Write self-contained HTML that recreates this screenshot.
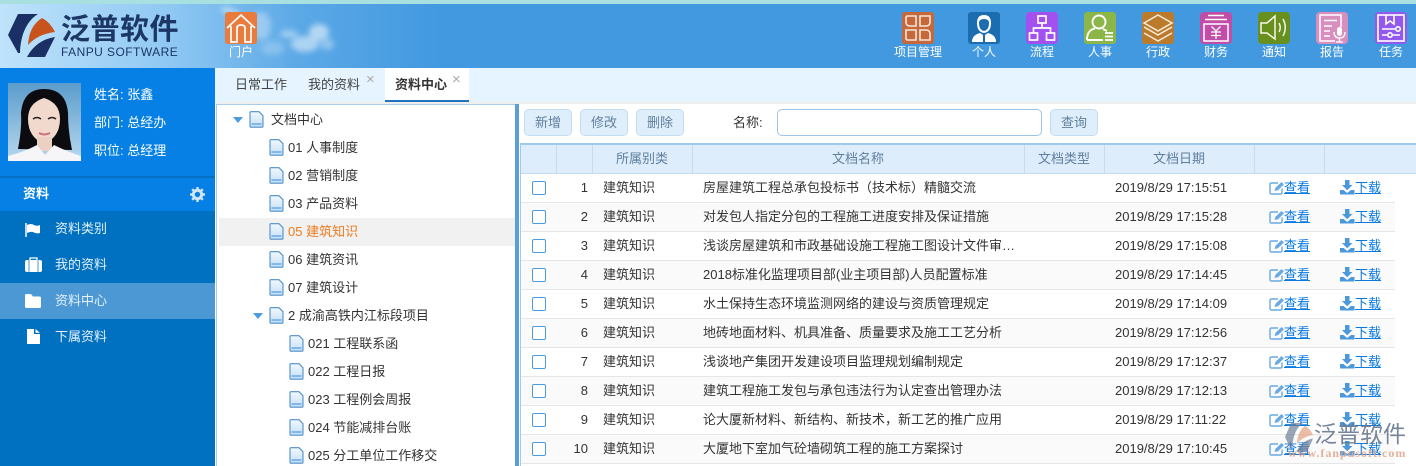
<!DOCTYPE html>
<html lang="zh"><head><meta charset="utf-8"><title>泛普软件</title>
<style>
*{box-sizing:border-box}
html,body{margin:0;padding:0;width:1416px;height:466px;overflow:hidden;background:#fff}
body{position:relative;font:13px "Liberation Sans","Noto Sans CJK SC",sans-serif;color:#333}
.a{position:absolute;white-space:nowrap}
#top{left:0;top:0;width:1416px;height:4px;background:#a8dfe0}
#hd{left:0;top:4px;width:1416px;height:64px;background:linear-gradient(90deg,#bfe3fb 0,#8fc8f3 170px,#5ba8e6 300px,#4299e0 440px,#4299e0 100%);overflow:hidden}
.ic{position:absolute;top:12px;width:32px;height:32px}
.lb{position:absolute;top:44px;width:80px;text-align:center;color:#fff;font-size:12px;line-height:16px}
#sb{left:0;top:68px;width:215px;height:398px;background:#0070c0}
.mi{position:absolute;left:0;width:215px;height:36px;line-height:35px;color:#e4f1fb;padding-left:55px}
.mi svg{position:absolute;left:24px;top:9px}
.ut{position:absolute;left:94px;color:#fff;line-height:18px}
.tab{position:absolute;top:69px;height:34px;line-height:32px;color:#444}
.x{position:absolute;color:#aaa;font-size:15px;line-height:14px}
.t{position:absolute;line-height:20px;color:#333;white-space:nowrap}
.d{position:absolute;width:15px;height:17px}
.ar{position:absolute;width:0;height:0;border-left:5px solid transparent;border-right:5px solid transparent;border-top:6px solid #4a9be0}
.btn{position:absolute;top:109px;height:27px;width:48px;background:#dfeefb;border:1px solid #c4dcf0;border-radius:5px;color:#607f9d;text-align:center;line-height:25px}
#th{left:520px;top:143px;width:896px;height:31px;background:#deedfb;border-top:2px solid #9ccbee;border-bottom:1px solid #c5dcf0}
#th i{position:absolute;top:0;width:1px;height:28px;background:#c5dcf0}
#th span{position:absolute;top:1px;line-height:26px;color:#5f7f9f;text-align:center}
.r{position:absolute;left:520px;width:875px;height:29px;border-bottom:1px solid #e6e6e6;background:#fff}
.r.e{background:#fbfafa}
.r span,.r a,.r b,.r svg{position:absolute}
.r span,.r a{top:0;line-height:27px;white-space:nowrap}
.r b{left:12px;top:7px;width:14px;height:14px;border:1px solid #4a9be0;border-radius:2px;background:#fff}
.r .n{left:40px;width:28px;text-align:right}
.r .k{left:83px}.r .m{left:183px}.r .dt{left:595px}
.r a{color:#0a7ae0;text-decoration:underline}
.r .v{left:764px}.r .l{left:835px}
.r .s1{left:749px;top:7px}.r .s2{left:820px;top:6px}
</style></head><body>
<svg width="0" height="0" style="position:absolute"><defs>
<linearGradient id="dg" x1="0" y1="0" x2="0" y2="1"><stop offset="0" stop-color="#f2f8fe"/><stop offset="1" stop-color="#c4e0f8"/></linearGradient>
<symbol id="doc" viewBox="0 0 15 17"><path d="M1 1.500Q1 .7 2 .7H10L14 4.700V15.200Q14 16.200 13 16.200H2Q1 16.200 1 15.200Z" fill="url(#dg)" stroke="#4f8fcb" stroke-width="1.100"/><path d="M2.500 13H12.500" stroke="#6eaee6" stroke-width="1.600"/></symbol>
<symbol id="ed" viewBox="0 0 16 14"><path d="M13 7.500V11.500Q13 13 11.500 13H2.500Q1 13 1 11.500V3.500Q1 2 2.500 2H9" fill="none" stroke="#69a9e4" stroke-width="1.400"/><path d="M5.500 10L6.500 6.800L12.500 1L15 3.400L9 9.200Z" fill="#69a9e4"/></symbol>
<symbol id="dl" viewBox="0 0 15 15"><path d="M5 0H9.500V5H12.500L7.200 10.200L2 5H5Z" fill="#4b98dc"/><path d="M0 10H3.500L7.200 13L11 10H14.500V14.500H0Z" fill="#4b98dc"/></symbol>
</defs></svg>

<div id="top" class="a"></div>
<div id="hd" class="a">
 <svg class="a" style="left:205px;top:-4px" width="170" height="68"><defs><filter id="bl" x="-30%" y="-30%" width="160%" height="160%"><feGaussianBlur stdDeviation="3"/></filter></defs><g fill="#fff" filter="url(#bl)"><ellipse cx="26" cy="12" rx="11" ry="4" opacity=".4" transform="rotate(25 26 12)"/><ellipse cx="56" cy="26" rx="10" ry="14" opacity=".32"/><ellipse cx="68" cy="48" rx="12" ry="7" opacity=".22"/><ellipse cx="84" cy="34" rx="9" ry="4" opacity=".4"/><ellipse cx="100" cy="44" rx="14" ry="8" opacity=".5"/><ellipse cx="114" cy="32" rx="10" ry="8" opacity=".55"/><ellipse cx="122" cy="44" rx="7" ry="6" opacity=".35"/></g></svg>
 <svg class="a" style="left:8px;top:10px" width="47" height="43" viewBox="0 0 47 43"><path d="M10 0H30Q20 6 15 20Q12 30 12 39H10L0 21Z" fill="#1a2f63"/><path d="M20 31Q21 12 34 4Q42 8 47 18Q30 20 20 31Z" fill="#c9531d"/><path d="M47 23Q28 26 19 43H37Z" fill="#1a2f63"/></svg>
 <div class="a" style="left:61px;top:9px;font-size:29px;font-weight:bold;line-height:34px;color:#1c3766;letter-spacing:.5px">泛普软件</div>
 <div class="a" style="left:61px;top:41px;font-size:12px;line-height:14px;color:#1c3766;letter-spacing:.45px">FANPU SOFTWARE</div>
</div>

<svg class="ic" style="left:225px" viewBox="0 0 32 32"><rect width="32" height="32" rx="3" fill="#e97b3c"/><path d="M2 16L16 3L30 16M6 14V30H12V16Q12 13 16 13Q20 13 20 16V30H26V14" fill="none" stroke="#fff" stroke-width="1.700"/></svg>
<div class="lb" style="left:201px">门户</div>

<svg class="ic" style="left:902px" viewBox="0 0 32 32"><rect width="32" height="32" rx="3" fill="#c6683a"/><g fill="none" stroke="#f3e6dc" stroke-width="1.600"><path d="M5 4H14V14H8Q4 14 4 10V5Z"/><path d="M18 4H28V10Q28 14 24 14H18Z"/><path d="M4 18H14V28H5L4 27Z"/><path d="M18 18H24Q28 18 28 22V28H18Z"/></g></svg>
<div class="lb" style="left:878px">项目管理</div>

<svg class="ic" style="left:968px" viewBox="0 0 32 32"><rect width="32" height="32" rx="3" fill="#1c6db0"/><path d="M9 11Q9 3 16 3Q23 3 23 11Q23 20 16 21Q9 20 9 11Z" fill="#fff"/><path d="M11 11Q11 7 16 7Q21 7 21 11Q21 18 16 19Q11 18 11 11Z" fill="#1c6db0"/><path d="M4 30Q4 23 12 21L15 23V30ZM28 30Q28 23 20 21L17 23V30Z" fill="#fff"/></svg>
<div class="lb" style="left:944px">个人</div>

<svg class="ic" style="left:1026px" viewBox="0 0 32 32"><rect width="32" height="32" rx="4" fill="#a250f0"/><g fill="none" stroke="#fff" stroke-width="1.700"><rect x="12" y="4" width="8" height="7"/><rect x="3.500" y="21" width="8" height="7"/><rect x="20.500" y="21" width="8" height="7"/><path d="M16 11V16M7.500 21V16H24.500V21"/></g></svg>
<div class="lb" style="left:1002px">流程</div>

<svg class="ic" style="left:1084px" viewBox="0 0 32 32"><rect width="32" height="32" rx="3" fill="#8cb648"/><g fill="none" stroke="#fff" stroke-width="1.900"><circle cx="15" cy="10" r="6.500"/><path d="M3 28Q3 18 11 16.500M19 17Q21 18 23 19M3 28H19"/></g><path d="M21 21H29M21 24.500H29M21 28H29" stroke="#fff" stroke-width="1.800"/></svg>
<div class="lb" style="left:1060px">人事</div>

<svg class="ic" style="left:1142px" viewBox="0 0 32 32"><rect width="32" height="32" rx="3" fill="#bb7a2c"/><g fill="none" stroke="#fbeedd" stroke-width="1.500"><path d="M16 3L30 11L16 19L2 11Z"/><path d="M2 15L16 23L30 15"/><path d="M2 21L16 29L30 21"/></g></svg>
<div class="lb" style="left:1118px">行政</div>

<svg class="ic" style="left:1200px" viewBox="0 0 32 32"><rect width="32" height="32" rx="4" fill="#c14da9"/><g fill="none" stroke="#fff" stroke-width="1.500"><path d="M8 3.500H24M5 7.500H27M4 12H28V29H4Z"/><path d="M11.500 14.500L16 19L20.500 14.500M11 20H21M11 23.500H21M16 19V27" stroke-width="1.300"/></g></svg>
<div class="lb" style="left:1176px">财务</div>

<svg class="ic" style="left:1258px" viewBox="0 0 32 32"><rect width="32" height="32" rx="4" fill="#68901f"/><g fill="none" stroke="#f4f7e8" stroke-width="1.500"><path d="M3 11H9L17 4V27L9 21H3Z"/><path d="M21 11Q23.500 15.500 21 20"/><path d="M25 7Q29.500 15.500 25 24"/></g></svg>
<div class="lb" style="left:1234px">通知</div>

<svg class="ic" style="left:1316px" viewBox="0 0 32 32"><rect width="32" height="32" rx="4" fill="#d88fbe"/><g fill="none" stroke="#fff" stroke-width="1.500"><path d="M19 29H4V3H25V15"/><path d="M8 8.500H21M8 14H16M8 19H14M8 24H14"/></g><rect x="21" y="15" width="5" height="9" rx="2.500" fill="#fff"/><path d="M18 20Q18 26 23.500 26Q29 26 29 20M23.500 26V30M20 30H27" fill="none" stroke="#fff" stroke-width="1.300"/></svg>
<div class="lb" style="left:1292px">报告</div>

<svg class="ic" style="left:1375px" viewBox="0 0 32 32"><rect width="32" height="32" rx="4" fill="#9259ec"/><g fill="none" stroke="#fff" stroke-width="1.600"><rect x="3" y="3" width="26" height="26"/><path d="M11 3V12L15 9L19 12V3"/><path d="M7 17H20M7 23H12M18 23H25"/><circle cx="23" cy="17" r="2.200"/><circle cx="15" cy="23" r="2.200"/></g></svg>
<div class="lb" style="left:1351px">任务</div>

<div id="sb" class="a"></div>
<div class="a" style="left:0;top:68px;width:215px;height:108px;background:#0680e4"></div>
<div class="a" style="left:0;top:176px;width:215px;height:2px;background:#0670c4"></div>
<div class="a" style="left:0;top:178px;width:215px;height:33px;background:#0680e4"></div>
<svg class="a" style="left:8px;top:83px" width="73" height="78" viewBox="0 0 73 78"><defs><linearGradient id="bg" x1="0" y1="0" x2="0" y2="1"><stop offset="0" stop-color="#5a9ccb"/><stop offset="1" stop-color="#b9d8ee"/></linearGradient></defs><rect width="73" height="78" fill="url(#bg)"/><path d="M10 66Q14 45 13 30Q15 6 36 6Q58 6 60 30Q60 48 64 67Z" fill="#0c0c10"/><path d="M20 36Q20 20 36 15Q52 20 52 36Q52 54 36 61Q20 54 20 36Z" fill="#f1d9cd"/><path d="M29 54H44V68H29Z" fill="#ecd0c2"/><path d="M0 78V73Q16 69 29 62L37 72L46 62Q60 69 73 73V78Z" fill="#f6f6f8"/><path d="M25 36Q29 33 33 36M40 36Q44 33 48 36" stroke="#2a2020" stroke-width="1.500" fill="none"/><path d="M31 50Q36 53 42 50" stroke="#cf7078" stroke-width="2" fill="none"/></svg>
<div class="ut" style="top:86px">姓名: 张鑫</div>
<div class="ut" style="top:114px">部门: 总经办</div>
<div class="ut" style="top:142px">职位: 总经理</div>
<div class="a" style="left:23px;top:185px;color:#fff;font-weight:bold;line-height:18px">资料</div>
<svg class="a" style="left:190px;top:187px" width="15" height="15" viewBox="0 0 15 15"><circle cx="7.500" cy="7.500" r="4.200" fill="none" stroke="#cfe6f8" stroke-width="3"/><path d="M7.500 0V3M7.500 12V15M0 7.500H3M12 7.500H15M2.200 2.200L4.300 4.300M10.700 10.700L12.800 12.800M2.200 12.800L4.300 10.700M10.700 4.300L12.800 2.200" stroke="#cfe6f8" stroke-width="2.400"/></svg>
<div class="mi" style="top:211px"><svg style="top:11px" width="18" height="16" viewBox="0 0 18 16"><path d="M2 1V15" stroke="#fff" stroke-width="1.500"/><path d="M3 3Q7 1 10 3Q13 4.500 16 3V11Q13 12 10 10.500Q7 9 3 11Z" fill="#fff"/></svg>资料类别</div>
<div class="mi" style="top:247px"><svg style="left:25px;top:10px" width="17" height="15" viewBox="0 0 17 15"><path d="M5 3V1H12V3" fill="none" stroke="#fff" stroke-width="1.300"/><rect x="0" y="3" width="17" height="12" rx="2" fill="#fff"/><path d="M4 3V15M13 3V15" stroke="#0070c0" stroke-width=".7"/></svg>我的资料</div>
<div class="mi" style="top:283px;background:#4c98d4"><svg style="left:25px;top:11px" width="16" height="14" viewBox="0 0 16 14"><path d="M0 1.500Q0 0 1.500 0H6L8 2.500H14.500Q16 2.500 16 4V12.500Q16 14 14.500 14H1.500Q0 14 0 12.500Z" fill="#fff"/></svg>资料中心</div>
<div class="mi" style="top:319px"><svg style="left:27px;top:10px" width="13" height="15" viewBox="0 0 13 15"><path d="M0 0H7V5H13V15H0ZM8.500 0L13 3.800H8.500Z" fill="#fff"/></svg>下属资料</div>

<div class="a" style="left:215px;top:68px;width:1201px;height:34px;background:#e6f4ff"></div>
<div class="a" style="left:215px;top:102px;width:1201px;height:2px;background:#eeeeee"></div>
<div class="tab" style="left:235px">日常工作</div>
<div class="tab" style="left:308px">我的资料</div>
<div class="x" style="left:366px;top:73px">×</div>
<div class="a" style="left:385px;top:68px;width:84px;height:34px;background:#fff;border-bottom:2px solid #1f72bf"></div>
<div class="tab" style="left:395px;font-weight:bold;color:#333">资料中心</div>
<div class="x" style="left:452px;top:73px">×</div>

<div class="a" style="left:216px;top:104px;width:300px;height:362px;background:#fff;border-top:1px solid #a8cdec;border-left:1px solid #a8cdec"></div>
<div class="a" style="left:515px;top:104px;width:4px;height:362px;background:#5a9fd6"></div>
<div class="a" style="left:519px;top:104px;width:897px;height:362px;background:#fff"></div>
<div class="a" style="left:219px;top:218px;width:296px;height:28px;background:#f1f1f1"></div>

<div class="ar" style="left:233px;top:117px"></div>
<svg class="d" style="left:249px;top:111px"><use href="#doc"/></svg><div class="t" style="left:271px;top:110px">文档中心</div>
<svg class="d" style="left:269px;top:139px"><use href="#doc"/></svg><div class="t" style="left:288px;top:138px">01 人事制度</div>
<svg class="d" style="left:269px;top:167px"><use href="#doc"/></svg><div class="t" style="left:288px;top:166px">02 营销制度</div>
<svg class="d" style="left:269px;top:195px"><use href="#doc"/></svg><div class="t" style="left:288px;top:194px">03 产品资料</div>
<svg class="d" style="left:269px;top:223px"><use href="#doc"/></svg><div class="t" style="left:288px;top:222px;color:#ee7b1e">05 建筑知识</div>
<svg class="d" style="left:269px;top:251px"><use href="#doc"/></svg><div class="t" style="left:288px;top:250px">06 建筑资讯</div>
<svg class="d" style="left:269px;top:279px"><use href="#doc"/></svg><div class="t" style="left:288px;top:278px">07 建筑设计</div>
<div class="ar" style="left:253px;top:313px"></div>
<svg class="d" style="left:269px;top:307px"><use href="#doc"/></svg><div class="t" style="left:288px;top:306px">2 成渝高铁内江标段项目</div>
<svg class="d" style="left:289px;top:335px"><use href="#doc"/></svg><div class="t" style="left:308px;top:334px">021 工程联系函</div>
<svg class="d" style="left:289px;top:363px"><use href="#doc"/></svg><div class="t" style="left:308px;top:362px">022 工程日报</div>
<svg class="d" style="left:289px;top:391px"><use href="#doc"/></svg><div class="t" style="left:308px;top:390px">023 工程例会周报</div>
<svg class="d" style="left:289px;top:419px"><use href="#doc"/></svg><div class="t" style="left:308px;top:418px">024 节能减排台账</div>
<svg class="d" style="left:289px;top:447px"><use href="#doc"/></svg><div class="t" style="left:308px;top:446px">025 分工单位工作移交</div>

<div class="btn" style="left:524px">新增</div>
<div class="btn" style="left:580px">修改</div>
<div class="btn" style="left:636px">删除</div>
<div class="a" style="left:733px;top:114px;line-height:18px">名称:</div>
<div class="a" style="left:777px;top:109px;width:265px;height:27px;background:#fff;border:1px solid #9cc6e8;border-radius:5px"></div>
<div class="btn" style="left:1050px">查询</div>

<div id="th" class="a">
 <i style="left:36px"></i><i style="left:72px"></i><i style="left:172px"></i><i style="left:504px"></i><i style="left:584px"></i><i style="left:734px"></i><i style="left:804px"></i>
 <span style="left:72px;width:100px">所属别类</span><span style="left:172px;width:332px">文档名称</span><span style="left:504px;width:80px">文档类型</span><span style="left:584px;width:150px">文档日期</span>
</div>

<div class="r" style="top:174px"><b></b><span class="n">1</span><span class="k">建筑知识</span><span class="m">房屋建筑工程总承包投标书（技术标）精髓交流</span><span class="dt">2019/8/29 17:15:51</span><svg class="s1" width="16" height="14"><use href="#ed"/></svg><a class="v">查看</a><svg class="s2" width="15" height="15"><use href="#dl"/></svg><a class="l">下载</a></div>
<div class="r e" style="top:203px"><b></b><span class="n">2</span><span class="k">建筑知识</span><span class="m">对发包人指定分包的工程施工进度安排及保证措施</span><span class="dt">2019/8/29 17:15:28</span><svg class="s1" width="16" height="14"><use href="#ed"/></svg><a class="v">查看</a><svg class="s2" width="15" height="15"><use href="#dl"/></svg><a class="l">下载</a></div>
<div class="r" style="top:232px"><b></b><span class="n">3</span><span class="k">建筑知识</span><span class="m">浅谈房屋建筑和市政基础设施工程施工图设计文件审…</span><span class="dt">2019/8/29 17:15:08</span><svg class="s1" width="16" height="14"><use href="#ed"/></svg><a class="v">查看</a><svg class="s2" width="15" height="15"><use href="#dl"/></svg><a class="l">下载</a></div>
<div class="r e" style="top:261px"><b></b><span class="n">4</span><span class="k">建筑知识</span><span class="m">2018标准化监理项目部(业主项目部)人员配置标准</span><span class="dt">2019/8/29 17:14:45</span><svg class="s1" width="16" height="14"><use href="#ed"/></svg><a class="v">查看</a><svg class="s2" width="15" height="15"><use href="#dl"/></svg><a class="l">下载</a></div>
<div class="r" style="top:290px"><b></b><span class="n">5</span><span class="k">建筑知识</span><span class="m">水土保持生态环境监测网络的建设与资质管理规定</span><span class="dt">2019/8/29 17:14:09</span><svg class="s1" width="16" height="14"><use href="#ed"/></svg><a class="v">查看</a><svg class="s2" width="15" height="15"><use href="#dl"/></svg><a class="l">下载</a></div>
<div class="r e" style="top:319px"><b></b><span class="n">6</span><span class="k">建筑知识</span><span class="m">地砖地面材料、机具准备、质量要求及施工工艺分析</span><span class="dt">2019/8/29 17:12:56</span><svg class="s1" width="16" height="14"><use href="#ed"/></svg><a class="v">查看</a><svg class="s2" width="15" height="15"><use href="#dl"/></svg><a class="l">下载</a></div>
<div class="r" style="top:348px"><b></b><span class="n">7</span><span class="k">建筑知识</span><span class="m">浅谈地产集团开发建设项目监理规划编制规定</span><span class="dt">2019/8/29 17:12:37</span><svg class="s1" width="16" height="14"><use href="#ed"/></svg><a class="v">查看</a><svg class="s2" width="15" height="15"><use href="#dl"/></svg><a class="l">下载</a></div>
<div class="r e" style="top:377px"><b></b><span class="n">8</span><span class="k">建筑知识</span><span class="m">建筑工程施工发包与承包违法行为认定查出管理办法</span><span class="dt">2019/8/29 17:12:13</span><svg class="s1" width="16" height="14"><use href="#ed"/></svg><a class="v">查看</a><svg class="s2" width="15" height="15"><use href="#dl"/></svg><a class="l">下载</a></div>
<div class="r" style="top:406px"><b></b><span class="n">9</span><span class="k">建筑知识</span><span class="m">论大厦新材料、新结构、新技术，新工艺的推广应用</span><span class="dt">2019/8/29 17:11:22</span><svg class="s1" width="16" height="14"><use href="#ed"/></svg><a class="v">查看</a><svg class="s2" width="15" height="15"><use href="#dl"/></svg><a class="l">下载</a></div>
<div class="r e" style="top:435px"><b></b><span class="n">10</span><span class="k">建筑知识</span><span class="m">大厦地下室加气砼墙砌筑工程的施工方案探讨</span><span class="dt">2019/8/29 17:10:45</span><svg class="s1" width="16" height="14"><use href="#ed"/></svg><a class="v">查看</a><svg class="s2" width="15" height="15"><use href="#dl"/></svg><a class="l">下载</a></div>
<div class="a" style="left:520px;top:143px;width:1px;height:323px;background:#9ccbee"></div>

<svg class="a" style="left:1285px;top:423px;opacity:.7" width="28" height="29" viewBox="0 0 47 43" preserveAspectRatio="none"><path d="M10 0H30Q20 6 15 20Q12 30 12 39H10L0 21Z" fill="#6f7f96"/><path d="M20 31Q21 12 34 4Q42 8 47 18Q30 20 20 31Z" fill="#e3a283"/><path d="M47 23Q28 26 19 43H37Z" fill="#6f7f96"/></svg>
<div class="a" style="left:1314px;top:419px;font-size:23px;line-height:30px;color:#68788e;opacity:.9">泛普软件</div>
<div class="a" style="left:1288px;top:445px;font:bold 12px/16px 'Liberation Serif',serif;letter-spacing:1px;color:#e0a58a;opacity:.85">www.fanpusoft.com</div>
</body></html>
